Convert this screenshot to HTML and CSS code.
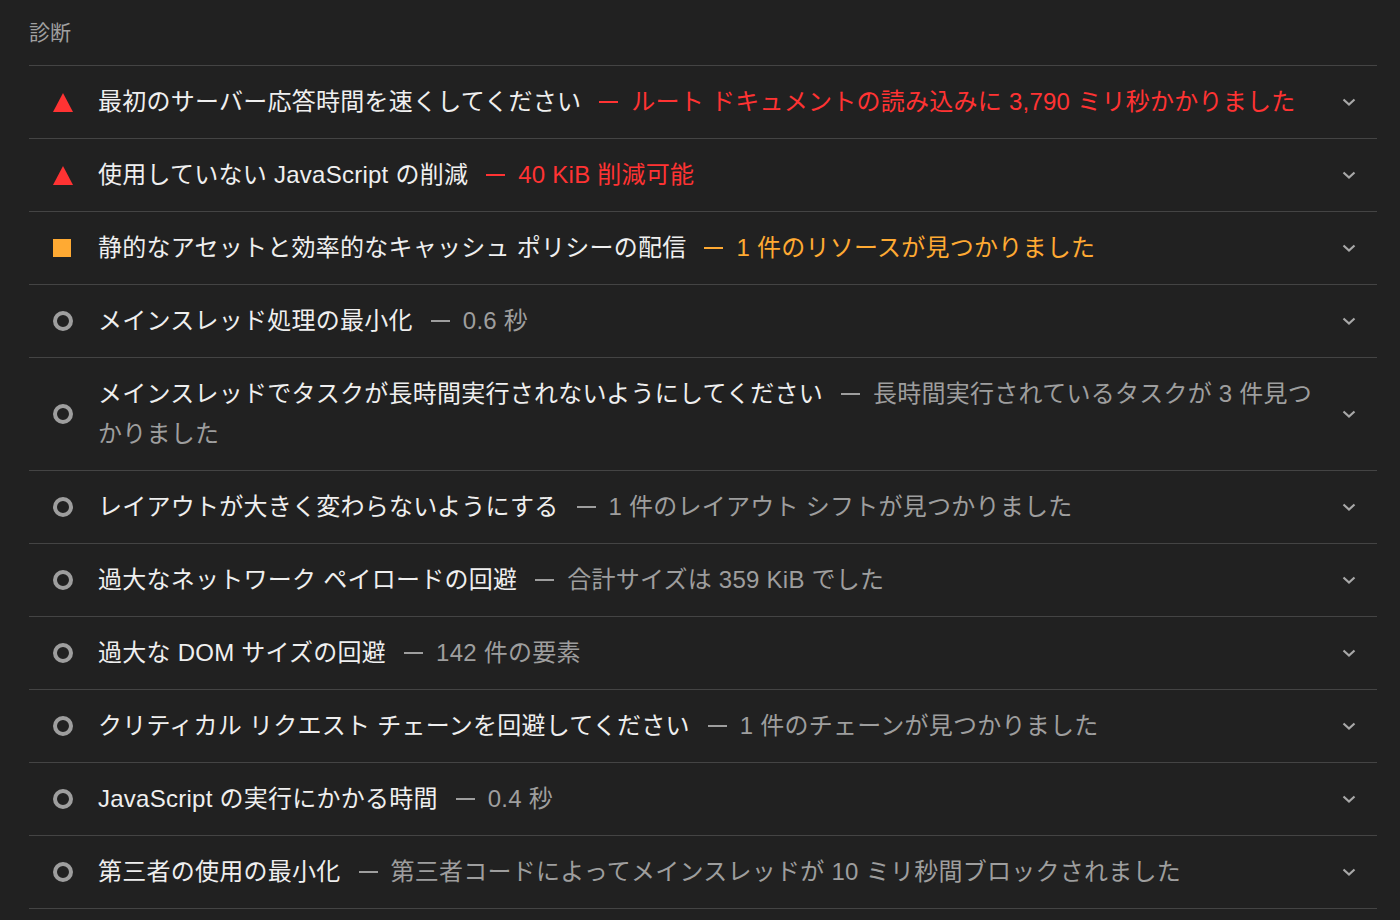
FILE: index.html
```html
<!DOCTYPE html>
<html lang="ja">
<head>
    <meta charset="UTF-8">
    <title>診断</title>
    <link rel="stylesheet" href="styles.css">
</head>
<body>
    <!-- Diagnostics group -->
    <div class="audit-group">
        <div class="group-header">診断</div>

        <div class="audit">
            <span class="audit-icon fail"><svg width="20" height="20" viewBox="0 0 20 20"><polygon points="10,1 20,20 0,20" fill="#ff3333"/></svg></span>
            <div class="audit-text"><span class="audit-title">最初のサーバー応答時間を速くしてください</span><span class="display-text fail">ルート ドキュメントの読み込みに 3,790 ミリ秒かかりました</span></div>
            <span class="chevron"><svg width="14" height="9" viewBox="0 0 14 9"><polyline points="1.5,1.5 7,6.5 12.5,1.5" fill="none" stroke="#a8a8a8" stroke-width="2.2"/></svg></span>
        </div>

        <div class="audit">
            <span class="audit-icon fail"><svg width="20" height="20" viewBox="0 0 20 20"><polygon points="10,1 20,20 0,20" fill="#ff3333"/></svg></span>
            <div class="audit-text"><span class="audit-title">使用していない JavaScript の削減</span><span class="display-text fail">40 KiB 削減可能</span></div>
            <span class="chevron"><svg width="14" height="9" viewBox="0 0 14 9"><polyline points="1.5,1.5 7,6.5 12.5,1.5" fill="none" stroke="#a8a8a8" stroke-width="2.2"/></svg></span>
        </div>

        <div class="audit">
            <span class="audit-icon"><span class="square"></span></span>
            <div class="audit-text"><span class="audit-title">静的なアセットと効率的なキャッシュ ポリシーの配信</span><span class="display-text average">1 件のリソースが見つかりました</span></div>
            <span class="chevron"><svg width="14" height="9" viewBox="0 0 14 9"><polyline points="1.5,1.5 7,6.5 12.5,1.5" fill="none" stroke="#a8a8a8" stroke-width="2.2"/></svg></span>
        </div>

        <div class="audit">
            <span class="audit-icon"><span class="ring"></span></span>
            <div class="audit-text"><span class="audit-title">メインスレッド処理の最小化</span><span class="display-text">0.6 秒</span></div>
            <span class="chevron"><svg width="14" height="9" viewBox="0 0 14 9"><polyline points="1.5,1.5 7,6.5 12.5,1.5" fill="none" stroke="#a8a8a8" stroke-width="2.2"/></svg></span>
        </div>

        <div class="audit">
            <span class="audit-icon"><span class="ring"></span></span>
            <div class="audit-text"><span class="audit-title">メインスレッドでタスクが長時間実行されないようにしてください</span><span class="display-text">長時間実行されているタスクが 3 件見つかりました</span></div>
            <span class="chevron"><svg width="14" height="9" viewBox="0 0 14 9"><polyline points="1.5,1.5 7,6.5 12.5,1.5" fill="none" stroke="#a8a8a8" stroke-width="2.2"/></svg></span>
        </div>

        <div class="audit">
            <span class="audit-icon"><span class="ring"></span></span>
            <div class="audit-text"><span class="audit-title">レイアウトが大きく変わらないようにする</span><span class="display-text">1 件のレイアウト シフトが見つかりました</span></div>
            <span class="chevron"><svg width="14" height="9" viewBox="0 0 14 9"><polyline points="1.5,1.5 7,6.5 12.5,1.5" fill="none" stroke="#a8a8a8" stroke-width="2.2"/></svg></span>
        </div>

        <div class="audit">
            <span class="audit-icon"><span class="ring"></span></span>
            <div class="audit-text"><span class="audit-title">過大なネットワーク ペイロードの回避</span><span class="display-text">合計サイズは 359 KiB でした</span></div>
            <span class="chevron"><svg width="14" height="9" viewBox="0 0 14 9"><polyline points="1.5,1.5 7,6.5 12.5,1.5" fill="none" stroke="#a8a8a8" stroke-width="2.2"/></svg></span>
        </div>

        <div class="audit">
            <span class="audit-icon"><span class="ring"></span></span>
            <div class="audit-text"><span class="audit-title">過大な DOM サイズの回避</span><span class="display-text">142 件の要素</span></div>
            <span class="chevron"><svg width="14" height="9" viewBox="0 0 14 9"><polyline points="1.5,1.5 7,6.5 12.5,1.5" fill="none" stroke="#a8a8a8" stroke-width="2.2"/></svg></span>
        </div>

        <div class="audit">
            <span class="audit-icon"><span class="ring"></span></span>
            <div class="audit-text"><span class="audit-title">クリティカル リクエスト チェーンを回避してください</span><span class="display-text">1 件のチェーンが見つかりました</span></div>
            <span class="chevron"><svg width="14" height="9" viewBox="0 0 14 9"><polyline points="1.5,1.5 7,6.5 12.5,1.5" fill="none" stroke="#a8a8a8" stroke-width="2.2"/></svg></span>
        </div>

        <div class="audit">
            <span class="audit-icon"><span class="ring"></span></span>
            <div class="audit-text"><span class="audit-title">JavaScript の実行にかかる時間</span><span class="display-text">0.4 秒</span></div>
            <span class="chevron"><svg width="14" height="9" viewBox="0 0 14 9"><polyline points="1.5,1.5 7,6.5 12.5,1.5" fill="none" stroke="#a8a8a8" stroke-width="2.2"/></svg></span>
        </div>

        <div class="audit">
            <span class="audit-icon"><span class="ring"></span></span>
            <div class="audit-text"><span class="audit-title">第三者の使用の最小化</span><span class="display-text">第三者コードによってメインスレッドが 10 ミリ秒間ブロックされました</span></div>
            <span class="chevron"><svg width="14" height="9" viewBox="0 0 14 9"><polyline points="1.5,1.5 7,6.5 12.5,1.5" fill="none" stroke="#a8a8a8" stroke-width="2.2"/></svg></span>
        </div>
    </div>
</body>
</html>
```

FILE: styles.css
```css
/* Dark report page */
body {
    margin: 0;
    padding: 0 23px 0 29px;
    background-color: #212121;
    color: #ececec;
    font-family: 'Liberation Sans', 'Noto Sans CJK JP', sans-serif;
    min-height: 100vh;
}

/* Group header */
.group-header {
    height: 65px;
    line-height: 66px;
    font-size: 21px;
    color: #a0a0a0;
    border-bottom: 1px solid #444;
}

/* Audit rows */
.audit {
    display: flex;
    align-items: center;
    padding: 16px 21px 16px 24px;
    border-bottom: 1px solid #444;
}

.audit-icon {
    flex: 0 0 20px;
    width: 20px;
    height: 20px;
    display: flex;
    align-items: center;
    justify-content: flex-start;
    margin-right: 25px;
}

.audit-icon svg {
    display: block;
}

.square {
    width: 18px;
    height: 18px;
    background-color: #ffaa33;
}

.ring {
    width: 12px;
    height: 12px;
    border: 4px solid #9e9e9e;
    border-radius: 50%;
}

.audit-text {
    flex: 1;
    font-size: 24px;
    line-height: 40px;
    letter-spacing: 0.25px;
}

.audit-title {
    color: #efefef;
}

.display-text {
    margin-left: 18px;
    color: #9e9e9e;
}

/* dash before the value */
.display-text::before {
    content: '';
    display: inline-block;
    width: 19px;
    height: 2px;
    background-color: currentColor;
    vertical-align: 7px;
    margin-right: 13px;
}

.display-text.fail {
    color: #ff3333;
}

.display-text.average {
    color: #ffaa33;
}

.chevron {
    flex: 0 0 14px;
    margin-left: 20px;
    display: flex;
    align-items: center;
}

.chevron svg {
    display: block;
}
```
